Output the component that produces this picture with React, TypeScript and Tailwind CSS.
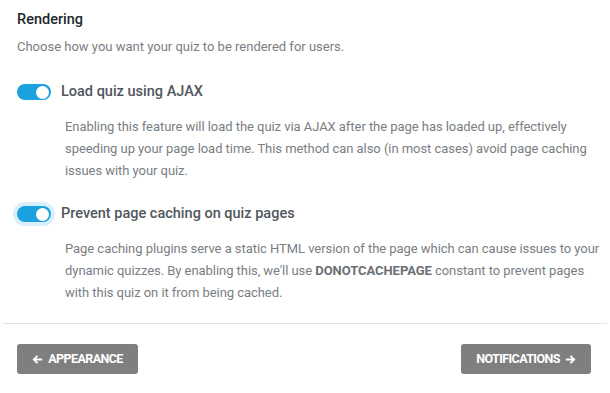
// settings panel: rendering
function Toggle({ focused }: { focused?: boolean }) {
  return (
    <span
      className={
        'inline-flex items-center rounded-full ' +
        (focused ? 'bg-[#d9effb] p-[4px] -m-[4px]' : '')
      }
    >
      <span className="flex h-[16px] w-[34px] items-center justify-end rounded-full bg-[#1ba1de] pr-[2px]">
        <span className="block h-[13px] w-[13px] rounded-full bg-white" />
      </span>
    </span>
  );
}

function Option({
  label,
  focused,
  children,
  mt,
}: {
  label: string;
  focused?: boolean;
  children: React.ReactNode;
  mt: string;
}) {
  return (
    <div className={mt}>
      <div className="flex h-5 items-center gap-[10px]">
        <Toggle focused={focused} />
        <span className="text-[14.5px] font-medium text-[#50575e]">{label}</span>
      </div>
      <p className="mt-[14px] -mr-[17px] pl-[48px] text-[13px] leading-[22px] tracking-[-0.05px] text-[#7a7e83]">
        {children}
      </p>
    </div>
  );
}

function ArrowLeft() {
  return (
    <svg viewBox="0 0 12 12" className="h-[11px] w-[11px]" fill="none" stroke="currentColor" strokeWidth={2}>
      <path d="M11 6H2M6 2L2 6l4 4" />
    </svg>
  );
}

function ArrowRight() {
  return (
    <svg viewBox="0 0 12 12" className="h-[11px] w-[11px]" fill="none" stroke="currentColor" strokeWidth={2}>
      <path d="M1 6h9M6 2l4 4-4 4" />
    </svg>
  );
}

export default function App() {
  return (
    <div className="h-[393px] w-[610px] overflow-hidden bg-white font-['Roboto',sans-serif]">
      <div className="px-[17px] pt-[10px]">
        <h2 className="text-[14.5px] font-medium leading-5 text-[#23282d]">Rendering</h2>
        <p className="mt-[7px] text-[13px] leading-5 text-[#7a7e83]">
          Choose how you want your quiz to be rendered for users.
        </p>

        <Option label="Load quiz using AJAX" mt="mt-[25px]">
          Enabling this feature will load the quiz via AJAX after the page has loaded up, effectively
          speeding up your page load time. This method can also (in most cases) avoid page caching
          issues with your quiz.
        </Option>

        <Option label="Prevent page caching on quiz pages" focused mt="mt-[22px]">
          Page caching plugins serve a static HTML version of the page which can cause issues to your
          dynamic quizzes. By enabling this, we'll use <b className="font-bold text-[#6b6f74]">DONOTCACHEPAGE</b>{' '}
          constant to prevent pages with this quiz on it from being cached.
        </Option>
      </div>

      <div className="mx-[3px] mt-[19px] border-t border-[#e4e4e4]" />

      <div className="flex justify-between px-[17px] pt-[20px] pr-[19px]">
        <button className="flex h-[30px] w-[121px] items-center justify-center gap-[5px] rounded-[3px] bg-[#7f7f7f] text-[12.5px] font-bold tracking-[-0.6px] text-white">
          <ArrowLeft />
          APPEARANCE
        </button>
        <button className="flex h-[30px] w-[130px] items-center justify-center gap-[5px] rounded-[3px] bg-[#7f7f7f] text-[12.5px] font-bold tracking-[-0.6px] text-white">
          NOTIFICATIONS
          <ArrowRight />
        </button>
      </div>
    </div>
  );
}
